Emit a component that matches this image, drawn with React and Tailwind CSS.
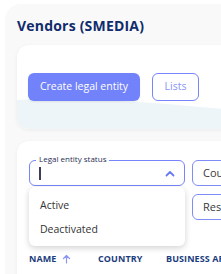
import React from "react";

function Field({ children, className = "" }) {
  return (
    <div className={`h-[26px] rounded-[6px] border border-[#7f8cf6] flex items-center pl-[10px] text-[11px] text-[#3a3a3a] whitespace-nowrap overflow-hidden ${className}`}>
      {children}
    </div>
  );
}

export default function App() {
  return (
    <div className="w-[221px] h-[274px] overflow-hidden bg-white pl-[5px] pt-[4px] font-['Open_Sans',sans-serif]">
      <div className="h-full bg-[#f9f9f9] rounded-tl-[16px] pl-[12px] pt-[14px]">
        <h1 className="text-[14px] leading-[16px] font-bold text-[#0f2c6c] tracking-[0.2px]">Vendors (SMEDIA)</h1>
        <div className="relative mt-[11px] h-[84px] w-[230px] bg-white rounded-l-[12px] shadow-[0_1px_4px_rgba(0,0,0,0.06)] overflow-hidden">
          <svg className="absolute left-0 bottom-0" width="230" height="32" viewBox="0 0 230 32" preserveAspectRatio="none">
            <path d="M0 3 C 60 -1, 140 6, 230 14 L230 32 L0 32 Z" fill="#eef5f9" />
          </svg>
          <div className="relative flex gap-[12px] pl-[11px] pt-[28px]">
            <button className="h-[28px] w-[112px] rounded-[6px] bg-[#7182fa] text-white text-[10.5px] shadow-[0_1px_2px_rgba(0,0,0,0.08)]">
              Create legal entity
            </button>
            <button className="h-[28px] w-[47px] rounded-[6px] border-[1.5px] border-[#7685f9] bg-white text-[#8795f8] text-[10.5px]">
              Lists
            </button>
          </div>
        </div>
        <div className="mt-[12px] h-[140px] w-[230px] bg-white rounded-tl-[12px] shadow-[0_1px_4px_rgba(0,0,0,0.05)] pl-[12px] pt-[19px]">
          <div className="grid grid-cols-[156px_60px] gap-x-[7px] gap-y-[8px]">
            <div className="relative">
              <div className="h-[26px] rounded-[6px] border-[1.5px] border-[#7685f9] flex items-center pl-[9px] pr-[9px]">
                <span className="w-[1.5px] h-[13px] bg-[#3d3d55]" />
                <svg className="ml-auto" width="10" height="7" viewBox="0 0 10 7">
                  <path d="M1.5 5.5 L5 2 L8.5 5.5" fill="none" stroke="#6b7bf3" strokeWidth="1.8" strokeLinecap="round" strokeLinejoin="round" />
                </svg>
              </div>
              <span className="absolute left-[7px] top-[-6px] bg-white px-[3px] text-[8px] leading-[10px] text-[#2a2f55]">Legal entity status</span>
              <div className="absolute left-0 top-[27px] z-10 w-[156px] h-[59px] bg-white rounded-[6px] shadow-[0_2px_6px_rgba(0,0,0,0.18)] flex flex-col pl-[11px] pt-[7px] text-[10.5px] text-[#333]">
                <div className="h-[24px] flex items-center">Active</div>
                <div className="h-[24px] flex items-center">Deactivated</div>
              </div>
            </div>
            <Field>Country</Field>
            <div className="h-[26px]" />
            <Field>Responsible</Field>
          </div>
          <div className="mt-[32px] flex items-center text-[9px] font-bold text-[#1b3d7d] tracking-[0.1px] whitespace-nowrap">
            <span className="flex items-center w-[69px]">
              NAME
              <svg className="ml-[6px]" width="9" height="10" viewBox="0 0 9 10">
                <path d="M4.5 9 V1.5 M1.5 4.5 L4.5 1.5 L7.5 4.5" fill="none" stroke="#8a97f6" strokeWidth="1.2" strokeLinecap="round" strokeLinejoin="round" />
              </svg>
            </span>
            <span className="w-[68px]">COUNTRY</span>
            <span>BUSINESS AREA</span>
          </div>
        </div>
      </div>
    </div>
  );
}
